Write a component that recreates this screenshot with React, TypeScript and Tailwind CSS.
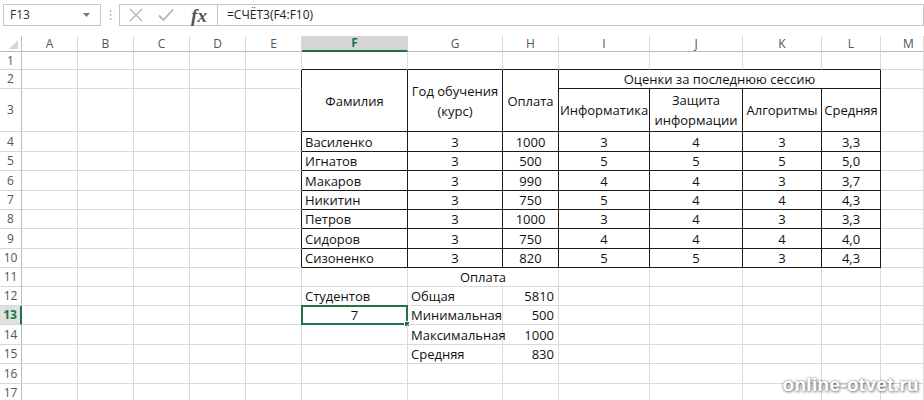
import React from "react";

const COLS = ["A", "B", "C", "D", "E", "F", "G", "H", "I", "J", "K", "L", "M"];

type Align = "l" | "c" | "r";
type CellDef = { t?: string; lines?: string[]; a?: Align; span?: string };

const students: [string, string, string, string, string, string, string][] = [
  ["Василенко", "3", "1000", "3", "4", "3", "3,3"],
  ["Игнатов", "3", "500", "5", "5", "5", "5,0"],
  ["Макаров", "3", "990", "4", "4", "3", "3,7"],
  ["Никитин", "3", "750", "5", "4", "4", "4,3"],
  ["Петров", "3", "1000", "3", "4", "3", "3,3"],
  ["Сидоров", "3", "750", "4", "4", "4", "4,0"],
  ["Сизоненко", "3", "820", "5", "5", "3", "4,3"],
];

function buildContent(): Record<string, CellDef> {
  const m: Record<string, CellDef> = {};
  m["2-6"] = { t: "Фамилия", a: "c", span: "row-span-2" };
  m["2-7"] = { lines: ["Год обучения", "(курс)"], a: "c", span: "row-span-2" };
  m["2-8"] = { t: "Оплата", a: "c", span: "row-span-2" };
  m["2-9"] = { t: "Оценки за последнюю сессию", a: "c", span: "col-span-4" };
  m["3-9"] = { t: "Информатика", a: "c" };
  m["3-10"] = { lines: ["Защита", "информации"], a: "c" };
  m["3-11"] = { t: "Алгоритмы", a: "c" };
  m["3-12"] = { t: "Средняя", a: "c" };
  students.forEach((s, i) => {
    const r = 4 + i;
    m[`${r}-6`] = { t: s[0], a: "l" };
    for (let k = 1; k < 7; k++) m[`${r}-${6 + k}`] = { t: s[k], a: "c" };
  });
  m["11-7"] = { t: "Оплата", a: "c", span: "col-span-2" };
  m["12-6"] = { t: "Студентов", a: "l" };
  m["13-6"] = { t: "7", a: "c" };
  const pay: [string, string][] = [
    ["Общая", "5810"],
    ["Минимальная", "500"],
    ["Максимальная", "1000"],
    ["Средняя", "830"],
  ];
  pay.forEach((p, i) => {
    m[`${12 + i}-7`] = { t: p[0], a: "l" };
    m[`${12 + i}-8`] = { t: p[1], a: "r" };
  });
  return m;
}

const content = buildContent();

function skipped(r: number, c: number) {
  if (r === 3 && c >= 6 && c <= 8) return true;
  if (r === 2 && c >= 10 && c <= 12) return true;
  if (r === 11 && c === 8) return true;
  return false;
}

function FormulaBar() {
  return (
    <div className="flex h-[36px] items-start bg-white pt-[4px]">
      <div className="ml-[3px] flex h-[22px] w-[98px] items-center justify-between border border-[#c6c6c6] bg-white pl-[6px] pr-[10px]">
        <span className="text-[12px] text-[#333]">F13</span>
        <svg width="7" height="4" viewBox="0 0 7 4">
          <path d="M0 0 L7 0 L3.5 4 Z" fill="#777" />
        </svg>
      </div>
      <div className="flex h-[22px] w-[18px] items-center justify-center">
        <svg width="3" height="12" viewBox="0 0 3 12">
          <circle cx="1.5" cy="2" r="0.9" fill="#b0b0b0" />
          <circle cx="1.5" cy="6" r="0.9" fill="#b0b0b0" />
          <circle cx="1.5" cy="10" r="0.9" fill="#b0b0b0" />
        </svg>
      </div>
      <div className="flex h-[22px] w-[99px] items-center border border-[#c6c6c6] bg-white">
        <div className="flex w-[31px] justify-center">
          <svg width="14" height="14" viewBox="0 0 14 14">
            <path d="M1 1 L13 13 M13 1 L1 13" stroke="#b5b5b5" strokeWidth="1.4" fill="none" />
          </svg>
        </div>
        <div className="flex w-[30px] justify-center">
          <svg width="16" height="14" viewBox="0 0 16 14">
            <path d="M1 7.5 L5.5 12 L15 1.5" stroke="#b5b5b5" strokeWidth="1.8" fill="none" />
          </svg>
        </div>
        <div className="flex w-[36px] justify-center">
          <span className="font-['Liberation_Serif',serif] text-[19px] font-bold italic leading-none text-[#555]">fx</span>
        </div>
      </div>
      <div className="flex h-[22px] flex-1 items-center border border-l-0 border-[#c6c6c6] bg-white pl-[9px]">
        <span className="text-[12px] text-[#222]">=СЧЁТ3(F4:F10)</span>
      </div>
    </div>
  );
}

function Grid() {
  const items: React.ReactNode[] = [];
  items.push(
    <div key="corner" className="relative border-b border-r border-b-[#bdbdbd] border-r-[#bdbdbd] bg-white">
      <svg className="absolute bottom-[2px] right-[3px]" width="9" height="9" viewBox="0 0 9 9">
        <path d="M9 0 L9 9 L0 9 Z" fill="#d6d6d6" />
      </svg>
    </div>
  );
  COLS.forEach((l, i) => {
    const sel = l === "F";
    items.push(
      <div
        key={`h-${l}`}
        className={
          "flex items-center justify-center border-r border-r-[#d8d8d8] text-[12px] " +
          (sel
            ? "border-b-2 border-b-[#217346] bg-[#d5d5d5] font-bold text-[#217346]"
            : "border-b border-b-[#bdbdbd] bg-white text-[#555]") +
          (i === COLS.length - 1 ? " justify-start pl-[22px]" : "")
        }
      >
        {l}
      </div>
    );
  });

  for (let r = 1; r <= 17; r++) {
    const selRow = r === 13;
    items.push(
      <div
        key={`r-${r}`}
        className={
          "flex items-center justify-center border-b border-b-[#d8d8d8] text-[12px] " +
          (selRow
            ? "border-r-2 border-r-[#217346] bg-[#e1e1e1] font-bold text-[#217346]"
            : "border-r border-r-[#bdbdbd] bg-white text-[#555]")
        }
      >
        {r}
      </div>
    );
    for (let c = 1; c <= 13; c++) {
      if (skipped(r, c)) continue;
      const def = content[`${r}-${c}`];
      const spanCols = def?.span === "col-span-4" ? 3 : def?.span === "col-span-2" ? 1 : 0;
      const lastCol = c + spanCols;
      const spanRows = def?.span === "row-span-2" ? 1 : 0;
      const lastRow = r + spanRows;
      const rightBlack = r >= 2 && r <= 10 && lastCol >= 5 && lastCol <= 12;
      const bottomBlack = lastCol >= 6 && c <= 12 && lastRow >= 1 && lastRow <= 10 && c >= 6;
      const align = def?.a ?? "l";
      const isSel = r === 13 && c === 6;
      items.push(
        <div
          key={`c-${r}-${c}`}
          className={
            "relative flex items-center whitespace-nowrap border-b border-r px-[3px] text-[13px] leading-[20px] text-[#111] " +
            (rightBlack ? "border-r-[#1a1a1a] " : "border-r-[#dadada] ") +
            (bottomBlack ? "border-b-[#1a1a1a] " : "border-b-[#dadada] ") +
            (align === "c" ? "justify-center text-center " : align === "r" ? "justify-end pr-[4px] " : "justify-start ") +
            (def?.span ?? "")
          }
        >
          {def?.lines ? (
            <div className="flex flex-col items-center">
              {def.lines.map((ln) => (
                <span key={ln}>{ln}</span>
              ))}
            </div>
          ) : (
            def?.t
          )}
          {isSel && (
            <div className="pointer-events-none absolute -left-[1px] -top-[1px] bottom-[-1px] right-[-1px] border-2 border-[#217346]">
              <div className="absolute -bottom-[4px] -right-[4px] h-[6px] w-[6px] border border-white bg-[#217346]" />
            </div>
          )}
        </div>
      );
    }
  }

  return (
    <div className="grid grid-cols-[22px_56px_56px_56px_56px_56px_106px_95px_56px_91px_93px_79px_59px_1fr] grid-rows-[16px_18px_19px_43px_20px_19px_20px_19px_19px_20px_19px_19px_19px_19px_20px_19px_20px_19px] bg-white">
      {items}
    </div>
  );
}

export default function App() {
  return (
    <div className="relative h-[400px] w-[924px] overflow-hidden bg-white font-['Open_Sans','Noto_Sans',sans-serif]">
      <FormulaBar />
      <Grid />
      <div className="absolute bottom-[1px] right-[5px] font-['Liberation_Sans',sans-serif] text-[19px] font-bold tracking-[0.3px] text-white [text-shadow:0_0_3px_rgba(0,0,0,0.5),1px_1px_3px_rgba(0,0,0,0.4)]">
        online-otvet.ru
      </div>
    </div>
  );
}
